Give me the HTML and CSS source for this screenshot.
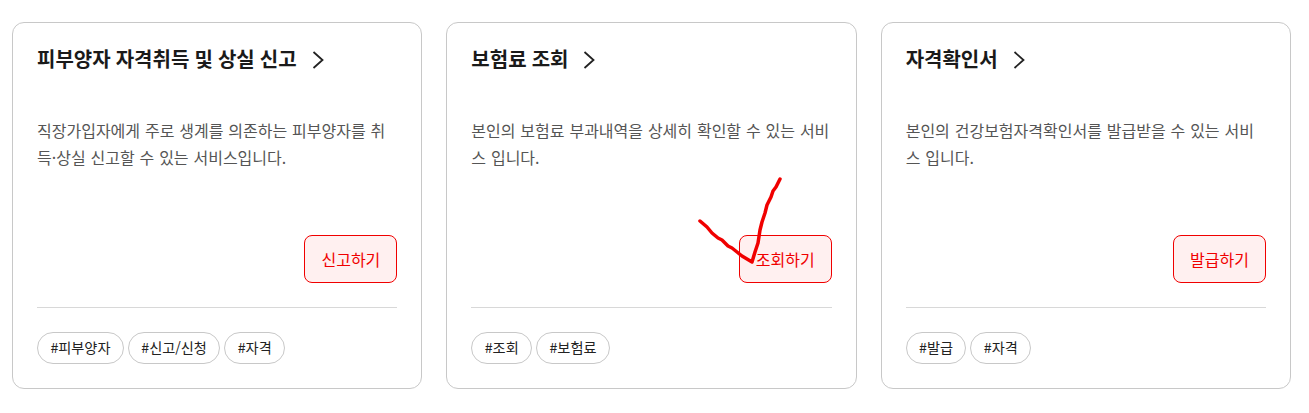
FILE: index.html
```html
<!DOCTYPE html>
<html lang="ko">
<head>
<meta charset="utf-8">
<title>서비스</title>
<link rel="stylesheet" href="styles.css">
</head>
<body>
<main class="cards">
  <section class="card">
    <h2 class="title">피부양자 자격취득 및 상실 신고<svg class="chev" viewBox="0 0 12 18" width="12" height="18"><path d="M1.500 1l9 8-9 8"/></svg></h2>
    <p class="desc">직장가입자에게 주로 생계를 의존하는 피부양자를 취득·상실 신고할 수 있는 서비스입니다.</p>
    <div class="actions"><a class="btn">신고하기</a></div>
    <ul class="tags"><li>#피부양자</li><li>#신고/신청</li><li>#자격</li></ul>
  </section>
  <section class="card">
    <h2 class="title">보험료 조회<svg class="chev" viewBox="0 0 12 18" width="12" height="18"><path d="M1.500 1l9 8-9 8"/></svg></h2>
    <p class="desc">본인의 보험료 부과내역을 상세히 확인할 수 있는 서비스 입니다.</p>
    <div class="actions"><a class="btn">조회하기</a></div>
    <ul class="tags"><li>#조회</li><li>#보험료</li></ul>
  </section>
  <section class="card">
    <h2 class="title">자격확인서<svg class="chev" viewBox="0 0 12 18" width="12" height="18"><path d="M1.500 1l9 8-9 8"/></svg></h2>
    <p class="desc">본인의 건강보험자격확인서를 발급받을 수 있는 서비스 입니다.</p>
    <div class="actions"><a class="btn">발급하기</a></div>
    <ul class="tags"><li>#발급</li><li>#자격</li></ul>
  </section>
</main>
<svg class="scribble" width="1309" height="413" viewBox="0 0 1309 413"><path d="M700 221L707 227L712 233L718 238L722 240L728 246L732 248L737 252L742 256L747 259L752 262L755 252L758 243L760 230L762 222L765 213L767 205L771 197L773 191L776 187L780 179"/></svg>
</body>
</html>
```
FILE: styles.css
```css
* { box-sizing: border-box; }
html, body { margin: 0; padding: 0; background: #fff; }
body {
  width: 1309px;
  height: 413px;
  overflow: hidden;
  position: relative;
  font-family: "Noto Sans CJK KR", "Noto Sans", sans-serif;
}
.cards {
  display: grid;
  grid-template-columns: repeat(3, 1fr);
  gap: 24px;
  padding: 22px 18px 0 12px;
}
.card {
  height: 367px;
  border: 1px solid #c8c8c8;
  border-radius: 12px;
  padding: 22px 24px 0 24px;
  display: flex;
  flex-direction: column;
}
.title {
  margin: 0;
  height: 28px;
  font-size: 20px;
  line-height: 28px;
  font-weight: 700;
  word-spacing: -0.500px;
  color: #1a1a1a;
  display: flex;
  align-items: center;
}
.chev { margin: 2px 0 0 15px; fill: none; stroke: #222; stroke-width: 1.800; }
.desc {
  margin: 44px 0 0;
  height: 54px;
  font-size: 16px;
  line-height: 27px;
  word-spacing: 0.400px;
  color: #555;
}
.actions {
  margin-top: 64px;
  display: flex;
  justify-content: flex-end;
}
.btn {
  height: 48px;
  padding: 0 16px 1px;
  border: 1px solid #f00000;
  border-radius: 8px;
  background: #fff0f0;
  color: #f00000;
  font-size: 16px;
  display: flex;
  align-items: center;
}
.tags {
  list-style: none;
  margin: 24px 0 0;
  padding: 24px 0 0;
  border-top: 1px solid #d8d8d8;
  display: flex;
  gap: 4px;
}
.tags li {
  height: 32px;
  padding: 0 12.400px;
  border: 1px solid #c8c8c8;
  border-radius: 16px;
  font-size: 14.200px;
  line-height: 29px;
  color: #222;
}
.scribble {
  position: absolute;
  left: 0;
  top: 0;
  pointer-events: none;
}
.scribble path {
  fill: none;
  stroke: #f00000;
  stroke-width: 3.500;
  stroke-linecap: round;
  stroke-linejoin: round;
}
```
